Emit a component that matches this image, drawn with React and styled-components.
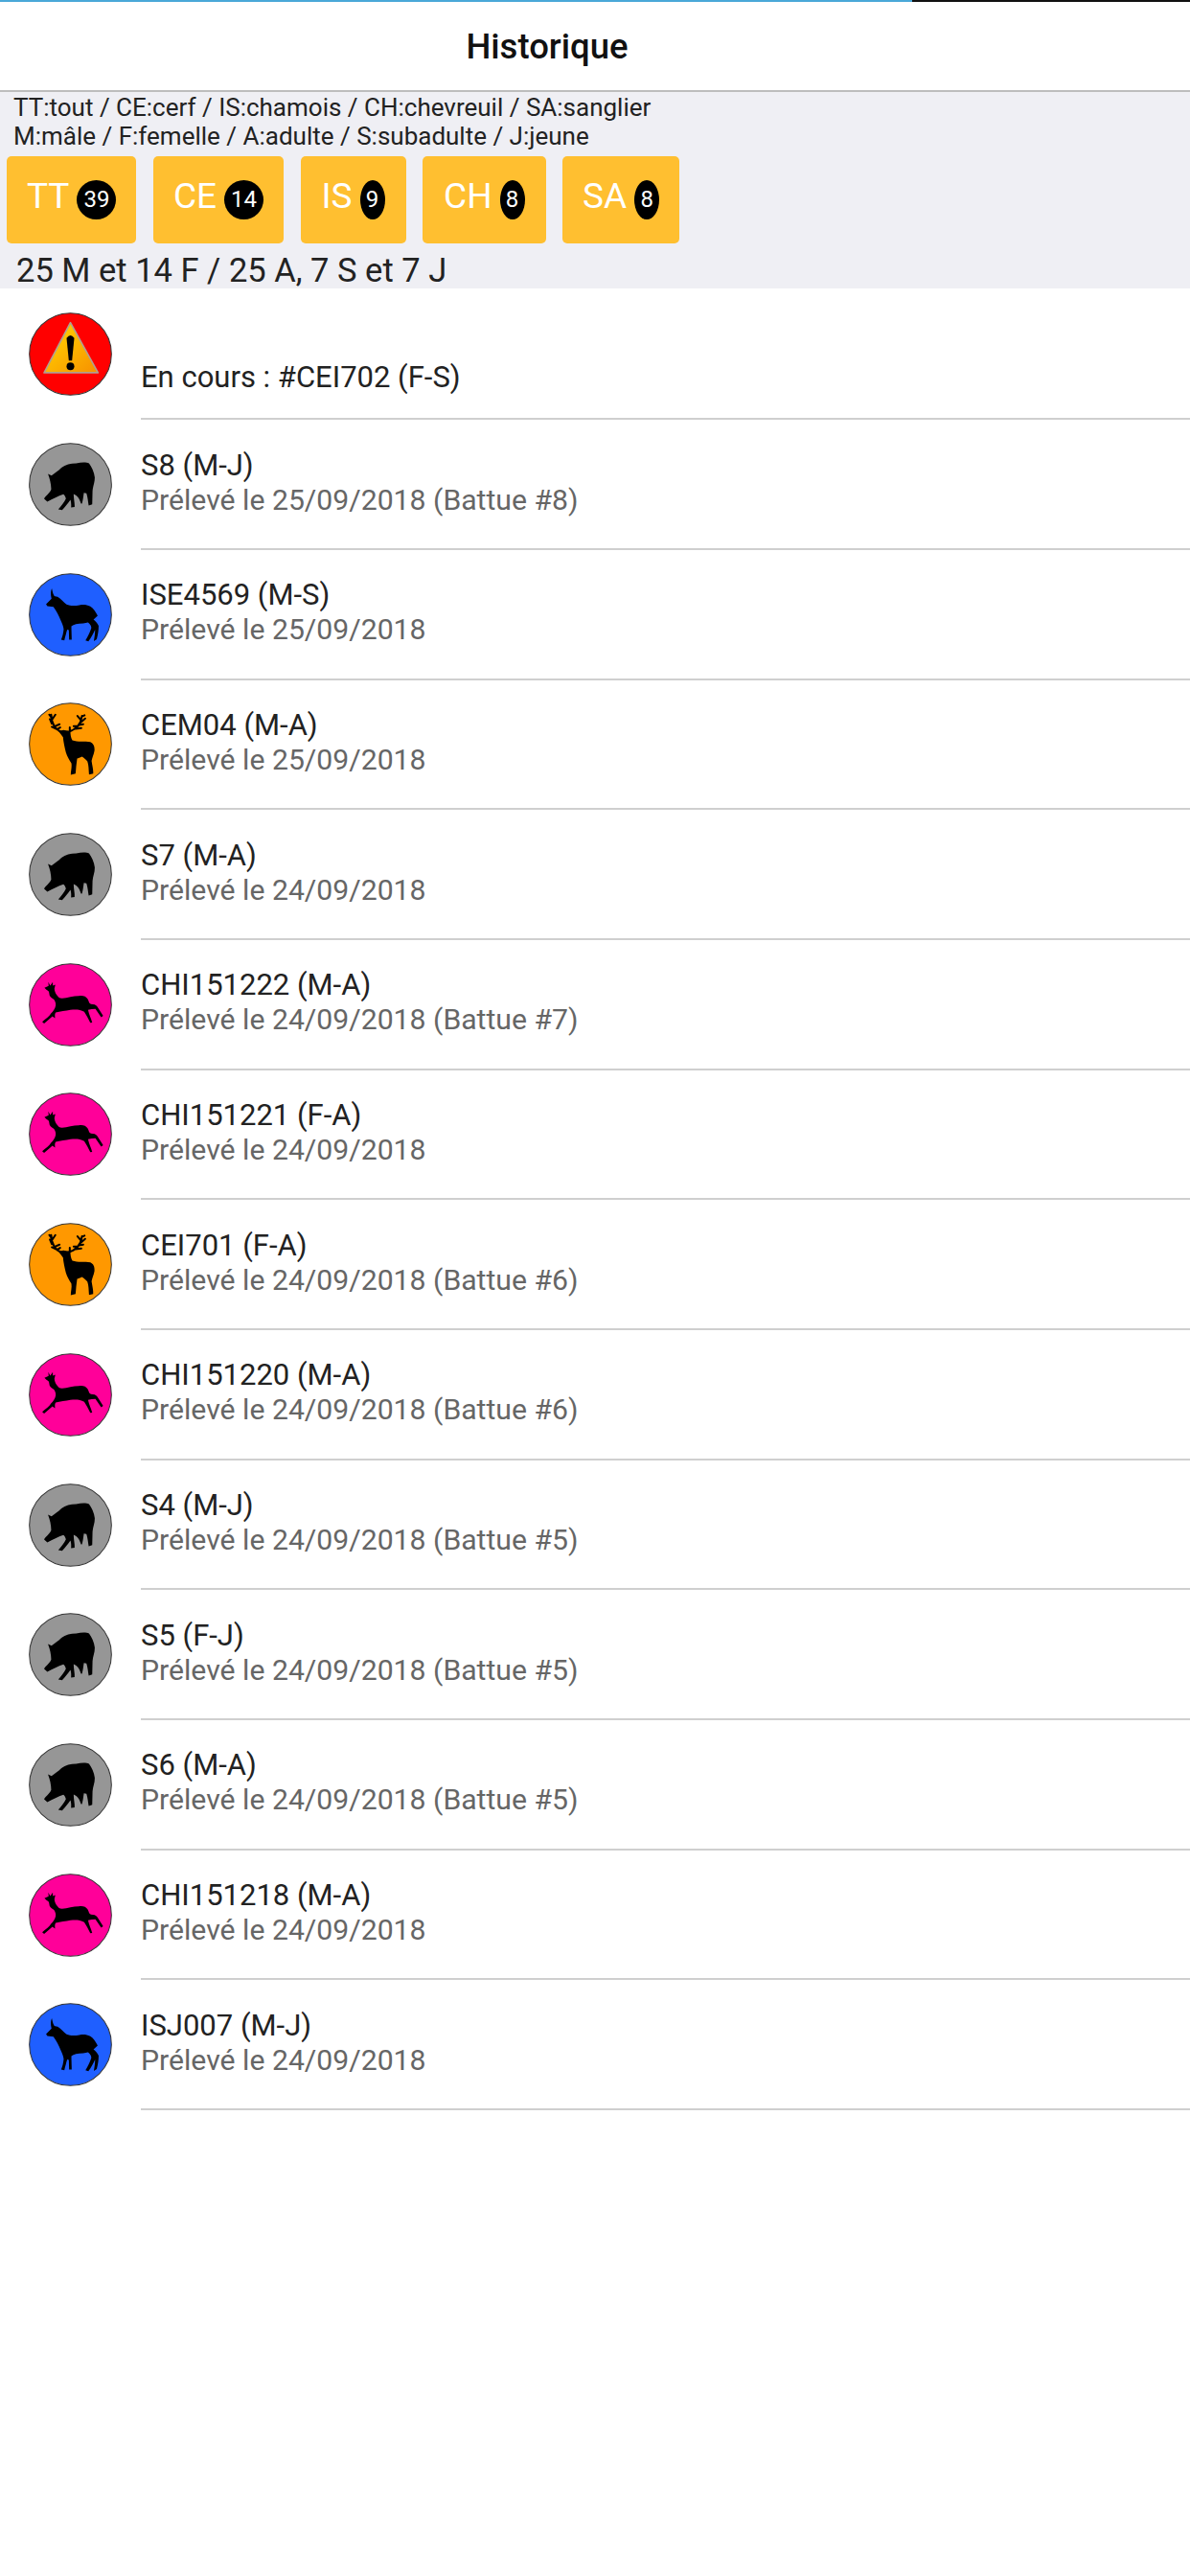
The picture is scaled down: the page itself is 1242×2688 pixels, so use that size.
import React from "react";
import styled, { createGlobalStyle } from "styled-components";

const Global = createGlobalStyle`
  html, body { margin: 0; padding: 0; background: #fff; }
  body { font-family: Roboto, "Liberation Sans", sans-serif; }
`;

const Page = styled.div`
  width: 1242px;
  min-height: 2688px;
  background: #fff;
`;
const Progress = styled.div`
  height: 2px;
  background: #111;
  display: flex;
`;
const ProgressFill = styled.div`
  width: 952px;
  background: #4aa8d8;
`;
const Header = styled.header`
  height: 92px;
  display: flex;
  align-items: center;
  justify-content: center;
  padding-right: 100px;
  border-bottom: 2px solid #bdbdbd;
`;
const Title = styled.h1`
  margin: 0;
  font-size: 36.5px;
  font-weight: 500;
  color: #111;
`;
const Filters = styled.section`
  height: 205px;
  background: #efeff4;
  box-sizing: border-box;
  padding-top: 1px;
`;
const Legend = styled.div`
  font-size: 26px;
  line-height: 30px;
  color: #222;
  padding-left: 14px;
`;
const ButtonRow = styled.div`
  display: flex;
  gap: 17.5px;
  padding-left: 7px;
  margin-top: 6px;
`;
const FilterButton = styled.div`
  height: 91px;
  display: flex;
  align-items: center;
  padding: 0 ${(p) => p.$pad}px;
  background: #ffbf30;
  border-radius: 5px;
  color: #fff;
  font-size: 37px;
`;
const ButtonLabel = styled.span`
  margin-bottom: 9px;
`;
const Badge = styled.span`
  margin-left: 8px;
  height: 41px;
  min-width: 26px;
  padding: 0 ${(p) => (p.$wide ? 7 : 6)}px;
  box-sizing: border-box;
  border-radius: 50%;
  background: #000;
  color: #fff;
  font-size: 24px;
  line-height: 41px;
  text-align: center;
`;
const Summary = styled.div`
  font-size: 34.5px;
  line-height: 40px;
  margin-top: 8px;
  padding-left: 17px;
  color: #222;
`;
const List = styled.div`
  padding-top: 1.5px;
`;
const Row = styled.div`
  height: 135.7px;
  display: flex;
`;
const AvatarCol = styled.div`
  width: 147px;
  flex: none;
  display: flex;
  align-items: center;
  padding-left: 30px;
  box-sizing: border-box;
  padding-bottom: 1px;
`;
const Avatar = styled.svg`
  width: 87px;
  height: 87px;
  display: block;
`;
const RowBody = styled.div`
  flex: 1;
  border-bottom: 2.5px solid #cfcfcf;
  box-sizing: border-box;
  display: flex;
  flex-direction: column;
  justify-content: center;
  padding-bottom: 4px;
`;
const Current = styled.div`
  font-size: 31px;
  line-height: 34px;
  color: #222;
  padding-top: 54px;
`;
const Name = styled.div`
  font-size: 31px;
  line-height: 34px;
  color: #222;
  margin-bottom: 2px;
`;
const Sub = styled.div`
  font-size: 30.2px;
  line-height: 33px;
  color: #666;
`;

const Boar = () => (
  <path
    fill="#000"
    d="M68 195 C72 186 84 180 90 166 C90 150 86 132 80 117 L91 122 C100 116 112 108 122 98 C135 88 150 84 168 84 C185 80 200 80 208 84 C216 95 224 110 226 128 C226 145 220 155 219 170 L218 212 L207 216 C205 205 204 190 200 178 L192 176 C190 190 189 200 186 210 L183 210 C180 200 176 190 168 184 L160 180 C160 195 164 210 163 220 L152 222 C153 212 152 204 150 198 C142 210 132 222 124 230 L112 228 C120 218 132 205 136 194 C134 188 132 184 128 181 C112 186 95 196 78 204 Z"
  />
);
const Chamois = () => (
  <path
    fill="#000"
    d="M92 68 C88 76 88 88 91 100 L74 117 L78 123 L97 125 C106 138 114 152 120 168 C124 178 128 185 129 195 C128 208 125 218 121 228 L131 230 C134 218 137 206 140 196 L145 198 L146 228 L154 228 C154 215 153 200 153 186 C160 180 172 177 190 177 L205 174 C212 180 216 186 215 192 C211 205 204 218 197 230 L206 233 C214 222 222 208 227 196 C227 208 225 220 223 232 L232 226 C236 212 238 198 238 184 C234 176 228 170 222 165 L235 153 C228 140 222 130 212 124 C200 118 190 118 178 120 C165 122 150 123 138 118 C130 112 120 100 110 94 C104 92 100 92 99 90 C95 84 94 76 92 68 Z"
  />
);
const Stag = () => (
  <g>
    <path
      fill="#000"
      d="M113 110 L128 106 L150 110 C150 120 151 130 156 138 C172 144 195 140 212 143 C222 148 226 156 225 170 C223 182 218 192 216 202 C218 216 222 230 221 242 L208 245 C207 230 207 215 203 204 C198 198 192 192 186 189 C180 192 174 194 171 195 C169 210 167 226 166 242 L151 246 C151 234 155 222 153 210 C146 198 140 188 136 176 C132 160 128 142 127 128 Z"
    />
    <path
      fill="none"
      stroke="#000"
      strokeWidth="6"
      strokeLinecap="round"
      d="M122 112 C105 106 92 92 90 58 M91 76 L103 58 M92 86 L86 72 M90 66 L84 58 M98 96 L116 88 M104 102 L92 96 M108 104 L118 98 M142 112 C165 106 182 92 186 62 M178 86 L196 70 M184 76 L172 62 M186 64 L194 60 M166 102 L184 100 M174 94 L160 94 M176 90 L190 88 M148 110 L148 98"
    />
  </g>
);
const Roe = () => (
  <path
    fill="#000"
    d="M69 97 L82 91 L81 79 L87 90 L95 79 L95 90 L103 87 L100 100 C101 108 103 114 108 120 C112 126 116 130 124 130 C140 128 160 122 176 122 C188 120 198 122 204 132 C208 140 208 146 214 148 C222 148 230 150 234 156 L252 184 L246 189 L228 163 C220 163 212 164 205 166 C208 180 214 192 218 205 L212 206 C206 194 200 182 193 172 C180 164 165 164 150 166 C135 170 118 170 104 174 C100 180 102 186 102 192 L94 186 L68 208 L62 203 C72 194 84 186 90 176 C96 170 102 162 104 152 C105 145 102 138 98 133 C90 128 84 124 84 116 C84 110 82 106 76 104 Z"
  />
);
const Warning = () => (
  <g>
    <path
      fill="url(#warn)"
      stroke="#b0a090"
      strokeWidth="5"
      strokeLinejoin="round"
      d="M150 52 L236 208 L68 208 Z"
    />
    <path fill="#000" d="M138 100 Q150 84 162 100 L155 170 L145 170 Z" />
    <circle cx="150" cy="188" r="12" fill="#000" />
  </g>
);

const kinds = {
  warn: { bg: "#ff0000", Icon: Warning },
  boar: { bg: "#969696", Icon: Boar },
  chamois: { bg: "#1f5fff", Icon: Chamois },
  stag: { bg: "#ff9800", Icon: Stag },
  roe: { bg: "#ff0099", Icon: Roe },
};

const Medallion = ({ kind }) => {
  const { bg, Icon } = kinds[kind];
  return (
    <Avatar viewBox="20 20 260 260">
      <circle cx="150" cy="150" r="128" fill={bg} stroke="#333" strokeWidth="3" />
      <Icon />
    </Avatar>
  );
};

const filters = [
  { label: "TT", count: 39, pad: 21 },
  { label: "CE", count: 14, pad: 21 },
  { label: "IS", count: 9, pad: 22 },
  { label: "CH", count: 8, pad: 22 },
  { label: "SA", count: 8, pad: 21 },
];

const rows = [
  ["boar", "S8 (M-J)", "Prélevé le 25/09/2018 (Battue #8)"],
  ["chamois", "ISE4569 (M-S)", "Prélevé le 25/09/2018"],
  ["stag", "CEM04 (M-A)", "Prélevé le 25/09/2018"],
  ["boar", "S7 (M-A)", "Prélevé le 24/09/2018"],
  ["roe", "CHI151222 (M-A)", "Prélevé le 24/09/2018 (Battue #7)"],
  ["roe", "CHI151221 (F-A)", "Prélevé le 24/09/2018"],
  ["stag", "CEI701 (F-A)", "Prélevé le 24/09/2018 (Battue #6)"],
  ["roe", "CHI151220 (M-A)", "Prélevé le 24/09/2018 (Battue #6)"],
  ["boar", "S4 (M-J)", "Prélevé le 24/09/2018 (Battue #5)"],
  ["boar", "S5 (F-J)", "Prélevé le 24/09/2018 (Battue #5)"],
  ["boar", "S6 (M-A)", "Prélevé le 24/09/2018 (Battue #5)"],
  ["roe", "CHI151218 (M-A)", "Prélevé le 24/09/2018"],
  ["chamois", "ISJ007 (M-J)", "Prélevé le 24/09/2018"],
];

export default function App() {
  return (
    <Page>
      <Global />
      <svg width="0" height="0" style={{ display: "block" }}>
        <defs>
          <linearGradient id="warn" x1="0" y1="0" x2="1" y2="1">
            <stop offset="0.2" stopColor="#ffcc00" />
            <stop offset="1" stopColor="#f79000" />
          </linearGradient>
        </defs>
      </svg>
      <Progress>
        <ProgressFill />
      </Progress>
      <Header>
        <Title>Historique</Title>
      </Header>
      <Filters>
        <Legend>
          TT:tout / CE:cerf / IS:chamois / CH:chevreuil / SA:sanglier
          <br />
          M:mâle / F:femelle / A:adulte / S:subadulte / J:jeune
        </Legend>
        <ButtonRow>
          {filters.map((f) => (
            <FilterButton key={f.label} $pad={f.pad}>
              <ButtonLabel>{f.label}</ButtonLabel>
              <Badge $wide={f.count > 9}>{f.count}</Badge>
            </FilterButton>
          ))}
        </ButtonRow>
        <Summary>25 M et 14 F / 25 A, 7 S et 7 J</Summary>
      </Filters>
      <List>
        <Row>
          <AvatarCol>
            <Medallion kind="warn" />
          </AvatarCol>
          <RowBody>
            <Current>En cours : #CEI702 (F-S)</Current>
          </RowBody>
        </Row>
        {rows.map(([kind, name, sub]) => (
          <Row key={name}>
            <AvatarCol>
              <Medallion kind={kind} />
            </AvatarCol>
            <RowBody>
              <Name>{name}</Name>
              <Sub>{sub}</Sub>
            </RowBody>
          </Row>
        ))}
      </List>
    </Page>
  );
}
